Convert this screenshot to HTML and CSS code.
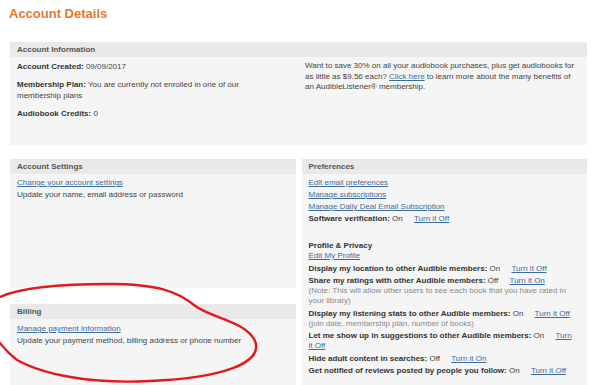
FILE: index.html
```html
<!DOCTYPE html>
<html lang="en">

<head>
    <meta charset="UTF-8">
    <title>Account Details</title>
    <link rel="stylesheet" href="styles.css">
</head>

<body>
    <div class="page">
        <h1 class="page-title">Account Details</h1>

        <!-- Account information -->
        <section class="panel panel-info">
            <h2 class="panel-head">Account Information</h2>
            <div class="info-body">
                <div class="info-main">
                    <p><b>Account Created:</b> 09/09/2017</p>
                    <p><b>Membership Plan:</b> You are currently not enrolled in one of our membership plans</p>
                    <p><b>Audiobook Credits:</b> 0</p>
                </div>
                <p class="info-promo">
                    Want to save 30% on all your audiobook purchases, plus get audiobooks for as little as $9.56 each?
                    <a href="#">Click here</a> to learn more about the many benefits of an AudibleListener&reg; membership.
                </p>
            </div>
        </section>

        <div class="columns">
            <div class="col-left">
                <section class="panel panel-settings">
                    <h2 class="panel-head">Account Settings</h2>
                    <div class="panel-body">
                        <div class="row"><a href="#">Change your account settings</a></div>
                        <div class="row">Update your name, email address or password</div>
                    </div>
                </section>

                <section class="panel panel-billing">
                    <h2 class="panel-head">Billing</h2>
                    <div class="panel-body">
                        <div class="row"><a href="#">Manage payment information</a></div>
                        <div class="row">Update your payment method, billing address or phone number</div>
                    </div>
                </section>
            </div>

            <section class="panel panel-prefs">
                <h2 class="panel-head">Preferences</h2>
                <div class="panel-body">
                    <div class="row"><a href="#">Edit email preferences</a></div>
                    <div class="row"><a href="#">Manage subscriptions</a></div>
                    <div class="row"><a href="#">Manage Daily Deal Email Subscription</a></div>
                    <div class="row"><b>Software verification:</b> On <a class="toggle" href="#">Turn it Off</a></div>

                    <div class="privacy">
                        <div class="sub-head"><b>Profile &amp; Privacy</b></div>
                        <div class="row"><a href="#">Edit My Profile</a></div>
                        <div class="row"><b>Display my location to other Audible members:</b> On <a class="toggle" href="#">Turn it Off</a></div>
                        <div class="row"><b>Share my ratings with other Audible members:</b> Off <a class="toggle" href="#">Turn it On</a>
                            <span class="note">(Note: This will allow other users to see each book that you have rated in your library)</span>
                        </div>
                        <div class="row"><b>Display my listening stats to other Audible members:</b> On <a class="toggle" href="#">Turn it Off</a>
                            <span class="note">(join date, membership plan, number of books)</span>
                        </div>
                        <div class="row"><b>Let me show up in suggestions to other Audible members:</b> On <a class="toggle" href="#">Turn it Off</a></div>
                        <div class="row"><b>Hide adult content in searches:</b> Off <a class="toggle" href="#">Turn it On</a></div>
                        <div class="row"><b>Get notified of reviews posted by people you follow:</b> On <a class="toggle" href="#">Turn it Off</a></div>
                    </div>
                </div>
            </section>
        </div>
    </div>

    <!-- hand-drawn marker circle around Billing -->
    <svg class="scribble" width="608" height="385" viewBox="0 0 608 385">
        <path d="M -4 299 C 12 290, 50 284, 110 284 C 158 284, 178 292, 194 305 C 210 318, 246 321, 255 341 C 264 363, 222 378, 150 381 C 92 384, 44 375, 17 360 C 8 353, 2 346, -4 338"
              fill="none" stroke="#e3191b" stroke-width="2.4" stroke-linecap="round" />
    </svg>
</body>

</html>
```

FILE: styles.css
```css
* {
    box-sizing: border-box;
}

body {
    margin: 0;
    height: 385px;
    overflow: hidden;
    position: relative;
    background: #fff;
    font-family: 'Liberation Sans', Arial, sans-serif;
    font-size: 8px;
    color: #444;
}

a {
    color: #3a6d9e;
    text-decoration: underline;
}

b {
    color: #333;
}

.page {
    padding: 0 21px 0 10px;
}

/* Title */
.page-title {
    margin: 0 0 21px -1px;
    padding-top: 6px;
    font-size: 13px;
    line-height: 15px;
    font-weight: bold;
    color: #e8772e;
}

/* Panels */
.panel {
    background: #f5f5f5;
}

.panel-head {
    margin: 0;
    padding: 0 7px;
    height: 15px;
    line-height: 15px;
    font-size: 8px;
    font-weight: bold;
    color: #555;
    background: #e9e9e9;
}

.panel-body {
    padding: 4px 6px 0 7px;
    line-height: 10px;
}

.row {
    margin-bottom: 2px;
}

/* Account information */
.panel-info {
    height: 103px;
}

.info-body {
    display: grid;
    grid-template-columns: 1fr 1fr;
    column-gap: 13px;
    padding: 4px 7px;
    line-height: 11px;
}

.info-main {
    max-width: 240px;
}

.info-main p {
    margin: 0 0 7px;
}

.info-promo {
    margin: 0;
    line-height: 10.5px;
}

/* Lower columns */
.columns {
    display: grid;
    grid-template-columns: 1fr 1fr;
    column-gap: 6px;
    margin-top: 14px;
}

.col-left {
    display: flex;
    flex-direction: column;
}

.panel-settings {
    height: 129px;
}

.panel-billing {
    margin-top: 16px;
    height: 81px;
}

.panel-billing .panel-body {
    padding-top: 5px;
}

.panel-prefs {
    height: 226px;
}

.panel-prefs .panel-body {
    padding-right: 10px;
}

/* Profile & Privacy block */
.privacy {
    margin-top: 17px;
}

.privacy .row {
    margin-bottom: 2.5px;
}

.toggle {
    margin-left: 9px;
}

.note {
    display: block;
    color: #8a8a8a;
}

/* Annotation */
.scribble {
    position: absolute;
    top: 0;
    left: 0;
    pointer-events: none;
}
```
